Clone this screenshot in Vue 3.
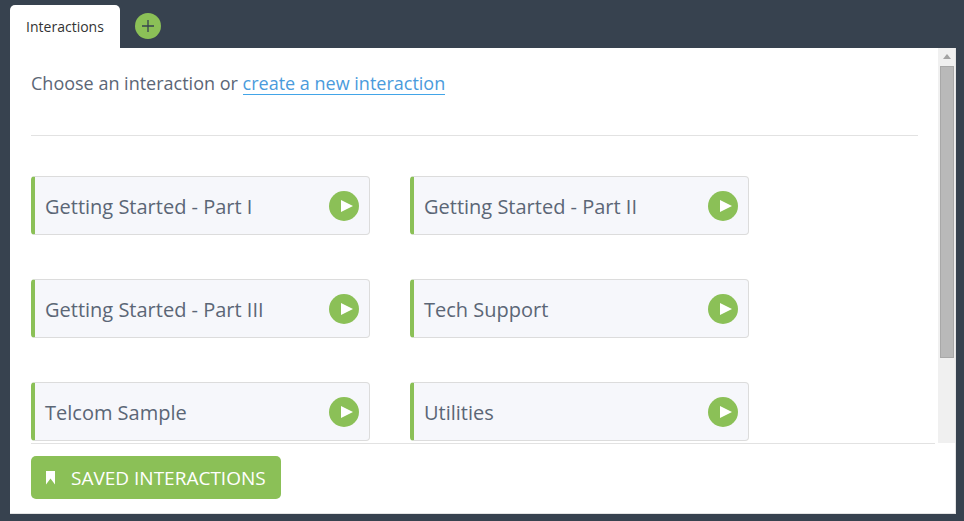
<script setup>
const items = [
  'Getting Started - Part I',
  'Getting Started - Part II',
  'Getting Started - Part III',
  'Tech Support',
  'Telcom Sample',
  'Utilities'
]
</script>

<template>
  <div class="page">
    <div class="tabs">
      <div class="tab">Interactions</div>
      <button class="add" aria-label="Add tab">
        <svg width="14" height="14" viewBox="0 0 14 14"><path d="M7 1v12M1 7h12" stroke="#37424f" stroke-width="1.3" fill="none" /></svg>
      </button>
    </div>
    <div class="panel">
      <div class="scroll-row">
        <div class="content">
          <p class="intro">Choose an interaction or <a class="link">create a new interaction</a></p>
          <hr class="rule" />
          <div class="grid">
            <div v-for="item in items" :key="item" class="card">
              <span class="name">{{ item }}</span>
              <span class="play">
                <svg width="12" height="12" viewBox="0 0 12 12"><path d="M0 0L12 6L0 12Z" fill="#fff" /></svg>
              </span>
            </div>
          </div>
        </div>
        <div class="scrollbar">
          <svg class="arrow" width="8" height="5" viewBox="0 0 8 5"><path d="M4 0L8 5H0Z" fill="#a3a3a3" /></svg>
          <div class="thumb"></div>
        </div>
      </div>
      <div class="footer">
        <button class="saved">
          <svg class="bookmark" width="9" height="14" viewBox="0 0 9 14"><path d="M0 0H9V13.5L4.5 7.5L0 13.5Z" fill="#fff" /></svg>
          <span>SAVED INTERACTIONS</span>
        </button>
      </div>
    </div>
  </div>
</template>

<style>
html, body { margin: 0; background: #37424f; }
</style>

<style scoped>
.page {
  width: 964px;
  height: 521px;
  background: #37424f;
  box-sizing: border-box;
  padding: 5px 8px 7px 10px;
  display: flex;
  flex-direction: column;
  font-family: "Open Sans", sans-serif;
  overflow: hidden;
}
.tabs {
  height: 43px;
  display: flex;
  flex: none;
}
.tab {
  width: 110px;
  background: #fff;
  border-radius: 5px 5px 0 0;
  font-size: 14px;
  color: #333;
  display: flex;
  align-items: center;
  justify-content: center;
  box-sizing: border-box;
}
.add {
  width: 26px;
  height: 26px;
  margin: 8px 0 0 15px;
  padding: 0;
  border: 0;
  border-radius: 50%;
  background: #8bc057;
  display: flex;
  align-items: center;
  justify-content: center;
}
.panel {
  flex: 1;
  min-height: 0;
  background: #fff;
  border-right: 1px solid #e4e4e4;
  border-bottom: 1px solid #e4e4e4;
  display: flex;
  flex-direction: column;
}
.scroll-row {
  height: 395px;
  flex: none;
  display: flex;
  overflow: hidden;
}
.content {
  flex: 1;
  min-width: 0;
  padding: 0 20px 0 21px;
  overflow: hidden;
}
.intro {
  margin: 0;
  padding-top: 24px;
  height: 63px;
  box-sizing: border-box;
  font-size: 18px;
  line-height: 23px;
  color: #5b6676;
}
.link {
  display: inline-block;
  line-height: 21px;
  color: #4a9bdc;
  border-bottom: 1px solid #42a5e8;
}
.rule {
  margin: 24px 0 40px;
  border: 0;
  border-top: 1px solid #e2e2e2;
}
.grid {
  display: grid;
  grid-template-columns: 339px 339px;
  column-gap: 40px;
  row-gap: 44px;
}
.card {
  height: 59px;
  box-sizing: border-box;
  display: flex;
  align-items: center;
  justify-content: space-between;
  background: #f6f7fb;
  border: 1px solid #dcdcdc;
  border-left: 4px solid #8bc057;
  border-radius: 4px;
  padding: 0 10px 0 10px;
}
.name {
  font-size: 20px;
  line-height: 27px;
  padding-top: 1px;
  color: #5b6676;
}
.play {
  width: 30px;
  height: 30px;
  border-radius: 50%;
  background: #8bc057;
  display: flex;
  align-items: center;
  justify-content: center;
  padding-left: 5px;
  box-sizing: border-box;
}
.scrollbar {
  width: 17px;
  flex: none;
  background: #f0f0f0;
  display: flex;
  flex-direction: column;
  align-items: center;
}
.arrow {
  margin-top: 6px;
}
.thumb {
  width: 14px;
  height: 292px;
  margin-top: 7px;
  box-sizing: border-box;
  background: #b9b9b9;
  border: 1px solid #a8a8a8;
}
.footer {
  flex: 1;
  margin: 0 20px 0 21px;
  border-top: 1px solid #e2e2e2;
  padding: 12px 0 0;
}
.saved {
  width: 250px;
  height: 43px;
  border: 0;
  border-radius: 5px;
  background: #8bc057;
  color: #fff;
  font-family: inherit;
  font-size: 19px;
  display: flex;
  align-items: center;
  padding: 0 0 0 15px;
}
.bookmark {
  margin-right: 16px;
}
</style>
